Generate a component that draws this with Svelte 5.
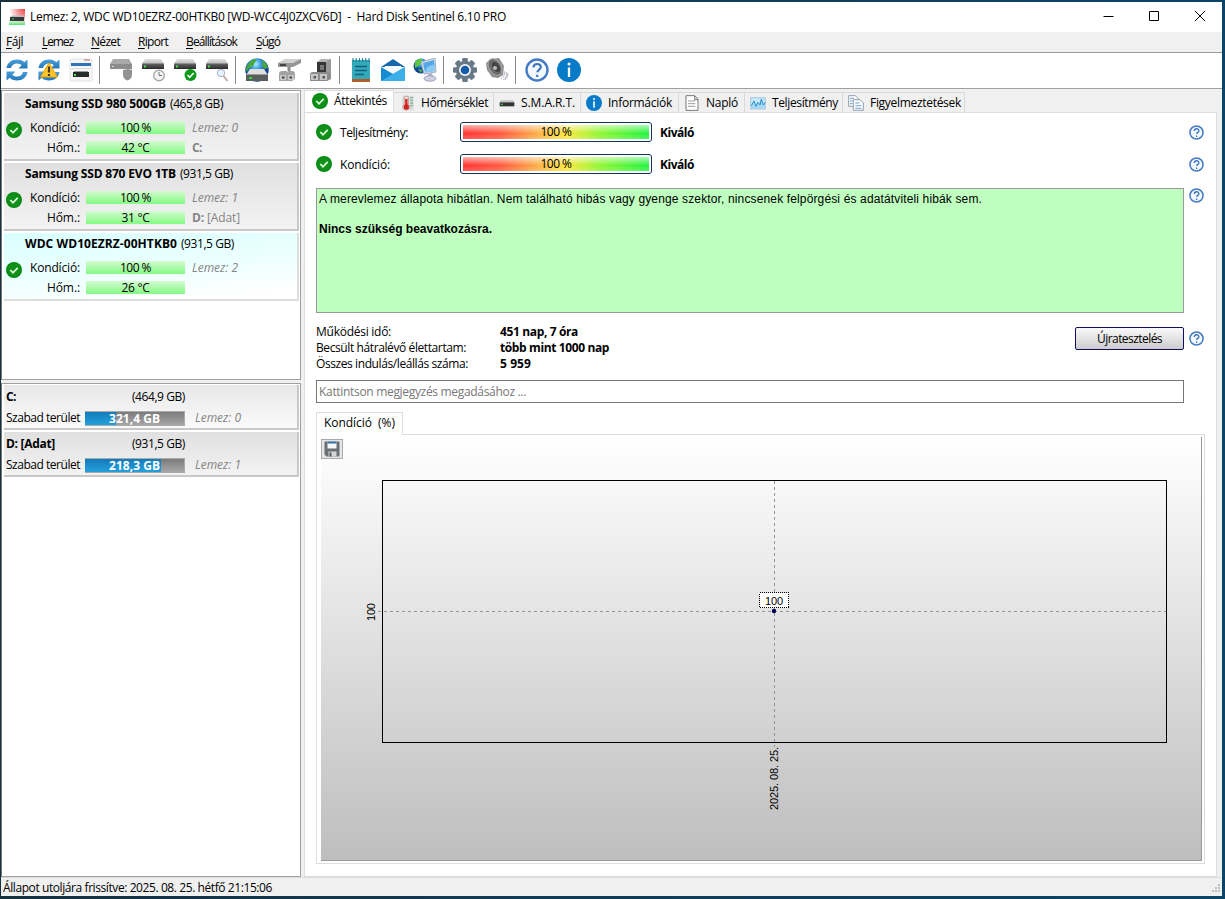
<script>
  // Adjusts tracking so that a label occupies its designed width.
  function fit(node, width) {
    const natural = node.getBoundingClientRect().width;
    const count = [...node.textContent].length;
    if (natural && width) node.style.letterSpacing = (width - natural) / count + 'px';
  }

  const menu = [
    ['F', 'ájl', 17, 5], ['L', 'emez', 31, 41], ['N', 'ézet', 29, 90],
    ['R', 'iport', 30, 137], ['B', 'eállítások', 51, 185], ['S', 'úgó', 24, 255]
  ];
  const tools = [
    ['refresh', 'warnrefresh', 'report'],
    ['driveoff', 'driveclock', 'drivecheck', 'drivesearch'],
    ['globe', 'cable', 'connector'],
    ['notes', 'mail', 'network'],
    ['gear', 'speaker'],
    ['help', 'info']
  ];
  const disks = [
    { name: 'Samsung SSD 980 500GB', nw: 141, size: '(465,8 GB)', sw: 53, temp: '42 °C', n: 0, vol: 'C:', label: '' },
    { name: 'Samsung SSD 870 EVO 1TB', nw: 151, size: '(931,5 GB)', sw: 53, temp: '31 °C', n: 1, vol: 'D:', label: '[Adat]' },
    { name: 'WDC WD10EZRZ-00HTKB0', nw: 152, size: '(931,5 GB)', sw: 53, temp: '26 °C', n: 2, vol: '', label: '', active: true }
  ];
  const volumes = [
    { name: 'C:', w: 10, size: '(464,9 GB)', free: '321,4 GB', used: 31, n: 0 },
    { name: 'D: [Adat]', w: 49, size: '(931,5 GB)', free: '218,3 GB', used: 77, n: 1 }
  ];
  const tabs = [
    ['thermo', 'Hőmérséklet', 67, 100], ['smart', 'S.M.A.R.T.', 54, 87], ['info', 'Információk', 64, 98],
    ['page', 'Napló', 32, 66], ['perf', 'Teljesítmény', 66, 98], ['pages', 'Figyelmeztetések', 91, 122]
  ];
  const gauges = [['Teljesítmény:', 68], ['Kondíció:', 50]];
  const stats = [
    ['Működési idő:', 75, '451 nap, 7 óra', 78],
    ['Becsült hátralévő élettartam:', 150, 'több mint 1000 nap', 109],
    ['Összes indulás/leállás száma:', 152, '5 959', 31]
  ];
</script>

{#snippet drive()}
  <path d="M4 5h16l3 5H1z" fill="url(#dtop)" />
  <path d="M1 9.500h22v5.500H1z" fill="url(#dface)" />
  <rect x="3" y="11.500" width="2" height="2" fill="#3ee04a" />
{/snippet}

{#snippet arrows()}
  <path d="M1.500 10C2.500 4.500 6.500 1.500 12 1.500c3.500 0 5.500 1 7.300 2.800L22.500 1.500v9H13.500l3.200-3.200C15.500 6.200 14 5.500 12 5.500c-3 0-5.200 1.500-6 4.500z" fill="url(#blu)" />
  <path d="M22.500 14c-1 5.500-5 8.500-10.500 8.500-3.500 0-5.500-1-7.300-2.800L1.500 22.500v-9h9l-3.200 3.200c1.200 1.100 2.700 1.800 4.700 1.800 3 0 5.200-1.500 6-4.500z" fill="url(#blu)" />
{/snippet}

{#snippet icon(name, size)}
  <svg class="ic" width={size} height={size} viewBox="0 0 24 24">
    {#if name === 'refresh'}
      {@render arrows()}
    {:else if name === 'warnrefresh'}
      {@render arrows()}
      <path d="M12 5 20.500 19h-17z" fill="#ffc62b" stroke="#e9a000" stroke-linejoin="round" />
      <path d="M12 8.500v6M12 16v2" stroke="#4c3820" stroke-width="2.200" />
    {:else if name === 'report'}
      <rect x="1" y="1" width="22" height="22" rx="1" fill="#f6f6f6" stroke="#e2e2e2" />
      <rect x="2" y="5" width="20" height="3" fill="#2f74b8" />
      <path d="M15 2h6" stroke="#b46868" />
      <path d="M2 10.500h20" stroke="#dcdcdc" />
      <rect x="4" y="14" width="16" height="5" fill="#272b2b" /><path d="M5 13.500h14" stroke="#999" /><rect x="5" y="16" width="2" height="2" fill="#3ee04a" />
    {:else if name === 'driveoff'}
      <path d="M4 1h16l3 5v1H1V6z" fill="#a9a9a9" /><path d="M1 6h22v5H1z" fill="#8c8c8c" />
      <path d="M14 12c2 0 3-1 5-1 1.500 0 2.500 1 4 1v5c0 3-2 4.500-4.500 5.500C16 21.500 14 20 14 17z" fill="#929292" />
      <path d="M3 8.500h2" stroke="#ddd" />
    {:else if name === 'driveclock'}
      <g transform="translate(0 -4)">{@render drive()}</g>
      <circle cx="18" cy="17.500" r="5.300" fill="#f4f4f4" stroke="#aaa" stroke-width="1.400" /><path d="M18 14v3.500h3" fill="none" stroke="#777" />
    {:else if name === 'drivecheck'}
      <g transform="translate(0 -4)">{@render drive()}</g>
      <circle cx="17.500" cy="17" r="6" fill="#0a9918" /><path d="m14.500 17 2.200 2.300 4-4.300" fill="none" stroke="#fff" stroke-width="1.700" />
    {:else if name === 'drivesearch'}
      <g transform="translate(0 -4)">{@render drive()}</g>
      <circle cx="16" cy="15" r="3.700" fill="#e6f2ff" stroke="#a6b4c4" /><path d="m18.500 18 4 5" stroke="#bda89a" stroke-width="1.800" />
    {:else if name === 'globe'}
      <circle cx="12" cy="12" r="11.700" fill="url(#glo)" />
      <path d="M2 8c2-4 6-7 9-7 1 1 0 2-1 3L8 8l-4 2-2 4c-1-2-1-4 0-6zM16 2c4 1 6 4 7 8l-3 1-3-3 1-3z" fill="#4aa93a" />
      <path d="M5 11h14l4 6H1z" fill="#dedede" /><path d="M1 16.500h22V23H1z" fill="#595d5d" /><path d="M1 16.500h22" stroke="#999" /><path d="M4 20h3" stroke="#2cd83a" stroke-width="2" />
    {:else if name === 'cable'}
      <path d="M1 5 9 1h15v4l-8 4H1z" fill="#969696" /><path d="m1 5 8-4h15l-8 4z" fill="#d0d0d0" /><path d="M3 7h6" stroke="#444" stroke-width="2" />
      <path d="M2 16q0-3 3-3h4q1 0 1.500 1 .5-1 1.500-1h3q3 0 3 3v5l-3 2H2z" fill="#a2a2a2" /><path d="M3 17h6v5H3zM11 17h6v5h-6z" fill="#c6c6c6" /><path d="M5 18.500h2.500v2H5zM12.500 18.500H15v2h-2.500z" fill="#444" /><path d="M12 9v4" stroke="#888" stroke-width="3" />
    {:else if name === 'connector'}
      <path d="M8 4 12 1h10v17H8z" fill="#b4b4b4" /><path d="M17 4 22 1v17h-5z" fill="#999" /><path d="M8 4h9v11H8z" fill="#363636" /><path d="M11 7h4v5h-4z" fill="#777" />
      <path d="M1 17q0-3 3-3h15l3 2v5l-4 2H1z" fill="#8c8c8c" /><path d="M2 16h7v6H2zM11 16h7v6h-7z" fill="#c7c7c7" /><path d="M4.500 18H7v2.500H4.500zM13.500 18H16v2.500h-2.500z" fill="#555" />
    {:else if name === 'notes'}
      <path d="M3 2h18v19H3z" fill="#35a9bc" /><path d="M3 21h18v3H3z" fill="#b35d25" />
      <path d="M4 0v4M7.200 0v4M10.400 0v4M13.600 0v4M16.800 0v4M20 0v4" stroke="#13778c" /><path d="M6 8.500h12M6 12.500h12M6 16.500h9" stroke="#126176" stroke-width="1.600" />
    {:else if name === 'mail'}
      <path d="m0 9 12-8 12 8z" fill="#1567ae" /><path d="M4 8h16v9H4z" fill="#f6fbff" />
      <path d="M0 9l12 7 12-7v14H0z" fill="#168bd2" /><path d="m0 23 24-14v14z" fill="#3cafe8" />
    {:else if name === 'network'}
      <circle cx="8" cy="8" r="7.500" fill="url(#glo)" /><path d="M2 4c3-4 8-4 7-2L7 7l-5 3zM5 11l4 1-1 3z" fill="#5ec43d" />
      <path d="m8 4 14-4 1 14-12 2z" fill="#d8e2ee" stroke="#a3aebc" /><path d="m10 5 11-3 1 11-10 1.500z" fill="#54a7e8" /><path d="m14 9 8-3v7l-10 1.500z" fill="#8cc9f3" /><path d="m15 16 4-1 1 4h-5z" fill="#aeb4c0" /><ellipse cx="17" cy="20.500" rx="6" ry="2.700" fill="#d0d0e4" stroke="#9fa0c0" />
    {:else if name === 'gear'}
      <g fill="#697887"><circle cx="12" cy="12" r="9.200" /><rect x="9.200" y="0" width="5.600" height="24" rx="1.300" /><rect x="9.200" y="0" width="5.600" height="24" rx="1.300" transform="rotate(45 12 12)" /><rect x="9.200" y="0" width="5.600" height="24" rx="1.300" transform="rotate(90 12 12)" /><rect x="9.200" y="0" width="5.600" height="24" rx="1.300" transform="rotate(135 12 12)" /></g>
      <circle cx="12" cy="12" r="6" fill="#f1f5fa" /><circle cx="12" cy="12" r="4.300" fill="#175cab" />
    {:else if name === 'speaker'}
      <path d="M2 12 1 5l5-4 8-1 5 8-1 9-5 3-6-1z" fill="#8d8d8d" /><ellipse cx="10" cy="9" rx="6" ry="9" transform="rotate(-32 10 9)" fill="#6c6c6c" stroke="#aaa" /><ellipse cx="11" cy="9" rx="3.500" ry="5.500" transform="rotate(-32 11 9)" fill="#444" /><circle cx="10" cy="10" r="2" fill="#bbb" />
      <path d="M19 13c1 3 0 6-3 8M21 14c1 3 0 6-3 8M23 15c0 3-1 5-3 7" fill="none" stroke="#b0b0c4" />
    {:else if name === 'help'}
      <circle cx="12" cy="12" r="10.500" fill="#f4f9ff" stroke="#447bc4" stroke-width="2.400" /><path d="M8.500 9.500c0-4.600 7.300-4.600 7.300-.400 0 2.600-3.500 2.700-3.500 5.200M12.200 16.800v2.300" fill="none" stroke="#4076bb" stroke-width="2.200" />
    {:else if name === 'info'}
      <circle cx="12" cy="12" r="12" fill="#087bc8" /><circle cx="12" cy="6" r="1.500" fill="#fff" /><path d="M12 9.500V19" stroke="#fff" stroke-width="2.300" />
    {:else if name === 'check'}
      <circle cx="12" cy="12" r="12" fill="#078912" /><circle cx="12" cy="12" r="10" fill="#109018" /><path d="m6.500 12 4 4.300 7-7.500" fill="none" stroke="#e3ffdf" stroke-width="2.500" />
    {:else if name === 'thermo'}
      <path d="M5 1h17v22H5z" fill="#d9dddd" /><path d="M17 4h4M17 8h4M17 12h4M17 16h4" stroke="#83b78e" stroke-width="2" /><path d="M8 3q3-3 6 0v11q4 3 2 6-5 5-10 0-2-3 2-6z" fill="#f0e1df" stroke="#bd7771" /><path d="M11 6v12" stroke="#d32822" stroke-width="3.500" /><circle cx="11" cy="18" r="4" fill="#cb251e" />
    {:else if name === 'smart'}
      <path d="M3 8h18l2 3H1z" fill="#c2c2c2" /><path d="M1 11h22v6H1z" fill="#303532" /><path d="M3 14h3" stroke="#40bd54" stroke-width="2" />
    {:else if name === 'page'}
      <path d="M3 1h13l5 5v17H3zM16 1v6h5" fill="#fff" stroke="#777" stroke-width="1.500" /><path d="M6 9h11M6 13h11M6 17h11" stroke="#9b9b9b" stroke-width="1.500" />
    {:else if name === 'perf'}
      <path d="M1 4h22v17H1z" fill="#c7e9fb" stroke="#8db4cc" /><path d="m2 16 4-7 3 8 3-6 3 4 2-9 3 9 3-4v9H2z" fill="#a4d8f5" /><path d="m2 16 4-7 3 8 3-6 3 4 2-9 3 9 3-4" fill="none" stroke="#2c8fce" stroke-width="1.500" />
    {:else if name === 'pages'}
      <g fill="#fafcff" stroke="#8293a3" stroke-width="1.300"><path d="M1 1h10l4 4v12H1z" /><path d="M8 7h10l5 5v11H8z" /></g><path d="M3 5h6M3 9h4M3 13h4M11 12h6M11 16h9M11 20h9" stroke="#6699c9" stroke-width="1.400" />
    {/if}
  </svg>
{/snippet}

<svg class="defs" width="0" height="0">
  <defs>
    <linearGradient id="blu" x2="0" y2="1"><stop stop-color="#4a9fd9" /><stop offset="1" stop-color="#2478ba" /></linearGradient>
    <linearGradient id="dtop" x2="0" y2="1"><stop stop-color="#e2e2e2" /><stop offset="1" stop-color="#b8b8b8" /></linearGradient>
    <linearGradient id="dface" x2="0" y2="1"><stop stop-color="#666" /><stop offset="1" stop-color="#2a2a2a" /></linearGradient>
    <radialGradient id="glo" cx=".45" cy=".25"><stop stop-color="#a5eeff" /><stop offset=".5" stop-color="#3793d8" /><stop offset="1" stop-color="#0d4390" /></radialGradient>
    <radialGradient id="lred" cx="1" cy="0" r="1"><stop stop-color="#f03c3c" /><stop offset="1" stop-color="#fff" /></radialGradient>
    <linearGradient id="lgreen" x2="0" y2="1"><stop stop-color="#fff" stop-opacity="0" /><stop offset="1" stop-color="#4fdc68" /></linearGradient>
  </defs>
</svg>

<div class="desktop">
  <div class="window">
    <header class="titlebar">
      <svg class="applogo" width="16" height="16"><rect width="16" height="16" fill="url(#lred)" /><rect y="8" width="16" height="8" fill="url(#lgreen)" /><path d="M3 6.500h10l2 2H1z" fill="#bbb" /><path d="M1 8h14v4H1z" fill="#34383a" /><path d="M3 10h2" stroke="#38dd52" /></svg>
      <span class="caption" use:fit={476}>Lemez: 2, WDC WD10EZRZ-00HTKB0 [WD-WCC4J0ZXCV6D]&nbsp; - &nbsp;Hard Disk Sentinel 6.10 PRO</span>
      <svg class="winctl" width="104" height="12" fill="none" stroke="#000"><path d="M.500 6.500h10M46.500 1.500h9v9h-9zM92 1l10 10M102 1 92 11" /></svg>
    </header>
    <nav class="menu">
      {#each menu as [key, rest, w], i}
        <span class="mi" style:width="{(menu[i + 1]?.[3] ?? 300) - menu[i][3]}px"><span use:fit={w}><u>{key}</u>{rest}</span></span>
      {/each}
    </nav>
    <div class="toolbar">
      {#each tools as group, g}
        {#if g}<i class="sep"></i>{/if}
        {#each group as t}<span class="tool">{@render icon(t, 24)}</span>{/each}
      {/each}
    </div>
    <main>
      <aside>
        <section class="disks">
          {#each disks as d}
            <article class:active={d.active}>
              <h3><b use:fit={d.nw}>{d.name}</b><span use:fit={d.sw}>{d.size}</span></h3>
              <div class="diskbody">
                {@render icon('check', 16)}
                <div class="diskrows">
                  <div class="row"><span class="lab"><span use:fit={50}>Kondíció:</span></span><span class="bar"><span use:fit={31}>100 %</span></span><em use:fit={46}>Lemez: {d.n}</em></div>
                  <div class="row"><span class="lab"><span use:fit={33}>Hőm.:</span></span><span class="bar"><span use:fit={28}>{d.temp}</span></span>{#if d.vol}<span class="vol" use:fit={d.label ? 48 : 10}><b>{d.vol}</b>{d.label ? ' ' + d.label : ''}</span>{/if}</div>
                </div>
              </div>
            </article>
          {/each}
        </section>
        <section class="volumes">
          {#each volumes as v}
            <article>
              <div class="vtop"><b use:fit={v.w}>{v.name}</b><span use:fit={53}>{v.size}</span></div>
              <div class="vrow"><span class="vlab"><span use:fit={74}>Szabad terület</span></span><span class="usage"><i style:width="{v.used}%"></i><b use:fit={51}>{v.free}</b></span><em use:fit={46}>Lemez: {v.n}</em></div>
            </article>
          {/each}
        </section>
      </aside>
      <section class="detail">
        <div class="tabs">
          <div class="tab on">{@render icon('check', 16)}<span use:fit={53}>Áttekintés</span></div>
          {#each tabs as [ic, label, w, tw]}
            <div class="tab" style:width="{tw}px">{@render icon(ic, 16)}<span use:fit={w}>{label}</span></div>
          {/each}
        </div>
        <div class="pane">
          {#each gauges as [label, w]}
            <div class="gauge">{@render icon('check', 16)}<span class="glabel"><span use:fit={w}>{label}</span></span><span class="meter"><i><span use:fit={31}>100 %</span></i></span><b use:fit={34}>Kiváló</b><span class="q">{@render icon('help', 15)}</span></div>
          {/each}
          <div class="message">
            <div class="note"><p><span use:fit={663}>A merevlemez állapota hibátlan. Nem található hibás vagy gyenge szektor, nincsenek felpörgési és adatátviteli hibák sem.</span></p><p><b use:fit={173}>Nincs szükség beavatkozásra.</b></p></div>
            <span class="q">{@render icon('help', 15)}</span>
          </div>
          <div class="facts">
            <div class="stats">
              {#each stats as [k, kw, v, vw]}
                <div class="stat"><span class="k"><span use:fit={kw}>{k}</span></span><b use:fit={vw}>{v}</b></div>
              {/each}
            </div>
            <button><span use:fit={65}>Újratesztelés</span></button>
            <span class="q">{@render icon('help', 15)}</span>
          </div>
          <div class="comment"><span use:fit={207}>Kattintson megjegyzés megadásához ...</span></div>
          <div class="charttab"><span use:fit={71}>Kondíció&nbsp; (%)</span></div>
          <div class="chartbox">
            <div class="chart">
              <svg width="880" height="422">
                <g transform="translate(.5 2.500)"><rect width="21" height="19" fill="#e6e6e6" stroke="#aaa" /><path d="M3 2h15v15H5l-2-2z" fill="#6b6f73" /><path d="M6 2h9v7H6z" fill="#f4f8fb" /><path d="M6 2h9v2H6z" fill="#3672a5" /><path d="M7 12h8v5H7z" fill="#d5d8da" /><path d="M8 13h2v4H8z" fill="#555" /></g>
                <rect x="61.500" y="43.500" width="784" height="262" fill="none" stroke="#000" />
                <g stroke="#949494" stroke-dasharray="3 3"><path d="M57 174.500h788M453.500 44v266" /></g>
                <circle cx="453" cy="174" r="2.200" fill="#000050" />
                <rect x="438.500" y="155.500" width="29" height="15" fill="#fff" stroke="#000" stroke-dasharray="1 1" shape-rendering="crispEdges" />
                <text x="453" y="167.500" text-anchor="middle" textLength="18">100</text>
                <text transform="translate(54 184) rotate(-90)" textLength="18">100</text>
                <text transform="translate(456.500 373) rotate(-90)" textLength="63">2025. 08. 25.</text>
              </svg>
            </div>
          </div>
        </div>
      </section>
    </main>
    <footer><span use:fit={269}>Állapot utoljára frissítve: 2025. 08. 25. hétfő 21:15:06</span><svg width="12" height="12" fill="#bdbdbd"><path d="M8 2h2v2H8zM5 5h2v2H5zM8 5h2v2H8zM2 8h2v2H2zM5 8h2v2H5zM8 8h2v2H8z" /></svg></footer>
  </div>
</div>

<style>
  :global(body) { background: #0e3c58; }
  * { box-sizing: border-box; }
  .desktop { width: 1225px; height: 899px; padding: 2px 3px 3px 1px; background: linear-gradient(90deg, #16303f, #123c56 50%, #0c4466); font: 12px/16px "Open Sans", "Noto Sans", sans-serif; color: #000; overflow: hidden; white-space: nowrap; }
  .defs { display: block; height: 0; }
  .window { width: 1221px; height: 894px; display: flex; flex-direction: column; background: #f0f0f0; }
  .ic { display: block; flex: none; }
  h3, p { margin: 0; font-size: inherit; font-weight: 400; }
  .titlebar { height: 30px; flex: none; background: #fff; display: flex; align-items: center; padding: 0 15px 0 8px; }
  .applogo { margin-right: 5px; }
  .winctl { margin-left: auto; position: relative; top: -1px; }
  .menu { height: 21px; flex: none; display: flex; align-items: center; padding-left: 5px; border-bottom: 1px solid #999; }
  .mi u { text-underline-offset: 2px; }
  .toolbar { height: 36px; flex: none; background: #fff; display: flex; align-items: center; padding-bottom: 2px; border-bottom: 1px solid #a0a0a0; }
  .tool { width: 32px; display: flex; justify-content: center; }
  .sep { width: 8px; height: 28px; background: linear-gradient(#8b8b8b, #8b8b8b) 2px 0 / 1px 100% no-repeat; }
  main { height: 788px; flex: none; display: flex; padding-top: 1px; }
  aside { width: 300px; display: flex; flex-direction: column; gap: 3px; }
  .disks, .volumes { background: #fff; border: 1px solid #a0a0a0; border-left-color: #777; padding: 1px 1px 1px 2px; }
  .disks { height: 290px; }
  .volumes { height: 494px; }
  article { border-right: 2px solid #c8c8c8; border-bottom: 2px solid #c8c8c8; background: linear-gradient(#e0e0e0, #f3f3f3); }
  .disks article { height: 68px; margin: 1px 0 2px; }
  article.active { background: linear-gradient(175deg, #d9ffff, #f0ffff 60%, #fff 90%); border-color: #ddd; }
  .disks h3 { height: 23px; display: flex; padding: 3px 0 0 21px; gap: 4px; }
  .diskbody { display: flex; padding-left: 2px; }
  .diskbody > :global(svg) { margin-top: 6px; }
  .diskrows { flex: 1; padding-top: 1px; }
  .row { height: 20px; display: flex; align-items: center; }
  .row > * { position: relative; top: 1px; }
  .lab { width: 58px; text-align: right; margin-right: 6px; }
  .row > .bar { width: 99px; height: 13px; display: flex; align-items: center; justify-content: center; background: linear-gradient(#d4fbd0, #84fa84); margin-right: 7px; top: 0; }
  .bar span { position: relative; top: 1px; }
  em, .vol { color: #858585; }
  em { font-family: "Open Sans", sans-serif; }
  .volumes article { height: 45px; margin: 0 0 2px; }
  .volumes article:first-child { background: linear-gradient(#e8e8e8, #fafafa); }
  .vtop { display: flex; justify-content: space-between; width: 181px; padding: 4px 0 4px 2px; }
  .vrow { display: flex; align-items: center; height: 18px; padding-left: 2px; }
  .vlab { width: 79px; }
  .usage { width: 100px; height: 15px; display: grid; background: linear-gradient(#7b7b7b, #a6a6a6); border: 1px solid #aaa; border-width: 1px 1px 1px 0; margin-right: 10px; color: #fff; }
  .usage i { grid-area: 1 / 1; background: linear-gradient(#147bbb, #24a0dc); }
  .usage b { grid-area: 1 / 1; justify-self: center; line-height: 13px; }
  .detail { width: 912px; margin-left: 3px; border-left: 1px solid #ddd; display: flex; flex-direction: column; }
  .tabs { height: 22px; display: flex; align-items: flex-end; }
  .tab { height: 20px; border: 1px solid #d9d9d9; border-width: 1px 1px 0 0; display: flex; align-items: center; gap: 6px; padding-left: 5px; }
  .tab.on { width: 89px; height: 22px; background: #fff; padding: 0 0 2px 7px; border-color: #ddd; }
  .pane { width: 912px; height: 766px; background: #fff; border: 1px solid #ddd; border-left: 0; padding: 3px 0 0 11px; }
  .gauge { height: 32px; display: flex; align-items: center; }
  .glabel, .gauge > b { position: relative; top: 1px; }
  .glabel { width: 120px; margin-left: 8px; }
  .meter { width: 192px; height: 20px; padding: 2px; border: 1px solid #14334f; border-radius: 3px; background: #fff; margin-right: 8px; }
  .meter i { height: 14px; display: flex; align-items: center; justify-content: center; font-style: normal; background: linear-gradient(#ffffffa0, #ffffff00 60%, #ffffff30), linear-gradient(90deg, #f33 0%, #ff593d 20%, #fba747 38%, #fbe93c 56%, #88f734 75%, #24f23f); }
  .q { margin-left: auto; margin-right: 12px; }
  .message { display: flex; align-items: flex-start; margin-top: 8px; }
  .note { width: 868px; height: 125px; border: 1px solid #999; background: #bfffbf; padding: 3px 2px; font: 12px/15px "Liberation Sans", Arial, sans-serif; }
  .note p + p { margin-top: 15px; }
  .facts { height: 67px; display: flex; padding-top: 14px; }
  .stats { width: 759px; margin-top: -3px; }
  .stat { display: flex; height: 16px; }
  .k { width: 184px; }
  button { width: 109px; height: 23px; font: inherit; border: 1px solid #10105a; border-radius: 2px; background: linear-gradient(#fafafa, #ccc); padding: 0; }
  .facts .q { margin-top: 4px; }
  .comment { width: 868px; height: 23px; border: 1px solid #777; padding: 2px 2px; color: #777; line-height: 17px; }
  .charttab { position: relative; width: 87px; height: 23px; margin-top: 9px; border: 1px solid #ddd; border-bottom: 0; background: #fff; padding: 2px 7px; z-index: 1; }
  .chartbox { width: 889px; height: 430px; margin-top: -1px; border: 1px solid #ddd; padding: 2px 3px 2px 4px; }
  .chart { width: 881px; height: 424px; border-right: 1px solid #999; border-bottom: 1px solid #999; background: linear-gradient(#fff, #bebebe); }
  .chart svg { display: block; }
  text { font: 11px "Liberation Sans", Arial, sans-serif; }
  footer { height: 19px; flex: none; display: flex; justify-content: space-between; align-items: center; padding: 1px 0 0 2px; border-top: 1px solid #ddd; }
</style>
